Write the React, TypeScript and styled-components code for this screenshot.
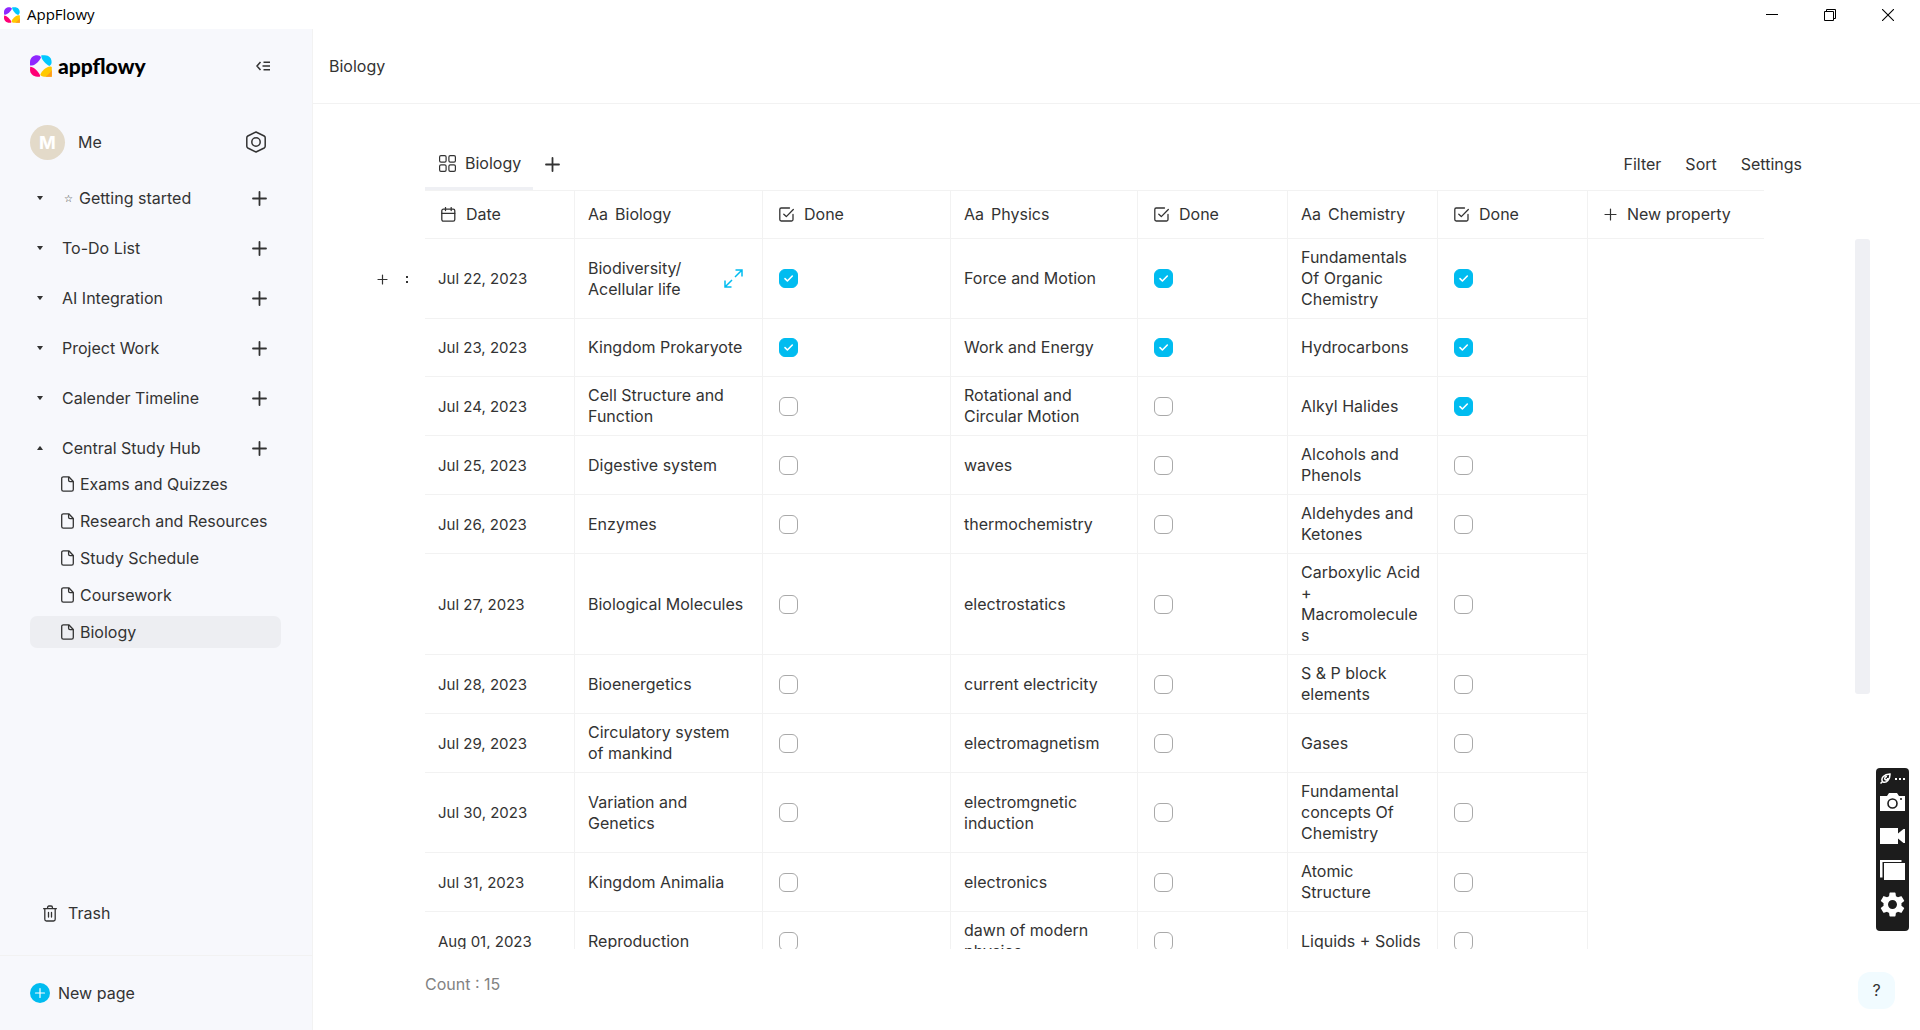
import React, { useState } from "react";
import styled, { createGlobalStyle } from "styled-components";

const GlobalStyle = createGlobalStyle`
  *, *::before, *::after { box-sizing: border-box; }
  body { margin: 0; background: #fff; }
  button, input { font: inherit; color: inherit; }
  button { border: 0; padding: 0; background: none; cursor: pointer; }
  svg { display: block; flex: none; }
`;

const ink = "#333333";
const line = "#f2f2f2";
const accent = "#00bcf0";

const Shell = styled.div`
  display: flex;
  flex-direction: column;
  height: 100vh;
  overflow: hidden;
  color: ${ink};
  font-family: Inter, "Noto Sans", sans-serif;
  font-size: 16px;
  line-height: 21px;
`;

const TitleBar = styled.header`
  display: flex;
  align-items: center;
  gap: 7px;
  height: 29px;
  padding: 0 20px 0 4px;
  flex: none;
  color: #000;
  font-family: "Open Sans", "Noto Sans", sans-serif;
  font-size: 15px;
`;

const WindowButtons = styled.div`
  display: flex;
  gap: 34px;
  margin-left: auto;
  button { display: grid; place-items: center; width: 24px; height: 24px; }
`;

const Body = styled.div`
  display: flex;
  flex: 1;
  min-height: 0;
`;

const Sidebar = styled.aside`
  display: flex;
  flex-direction: column;
  width: 313px;
  flex: none;
  background: #f7f8fc;
  border-right: 1px solid ${line};
`;

const Brand = styled.div`
  display: flex;
  align-items: center;
  gap: 6px;
  height: 74px;
  padding: 0 42px 0 30px;
`;

const BrandName = styled.span`
  color: #000;
  font-family: Lato, sans-serif;
  font-size: 21px;
  font-weight: 900;
  line-height: 26px;
`;

const IconButton = styled.button<{ $end?: boolean }>`
  display: grid;
  place-items: center;
  flex: none;
  margin-left: ${(p) => (p.$end ? "auto" : "0")};
`;

const User = styled.div`
  display: flex;
  align-items: center;
  gap: 13px;
  height: 36px;
  margin: 21px 46px 13px 30px;
`;

const Avatar = styled.span`
  display: grid;
  place-items: center;
  width: 35px;
  height: 35px;
  border-radius: 50%;
  background: #e3dac9;
  color: #fff;
  font-size: 18px;
  font-weight: 700;
`;

const Tree = styled.nav`
  display: flex;
  flex-direction: column;
`;

const TreeRow = styled.div`
  display: flex;
  align-items: center;
  height: 50px;
  padding: 0 45px 0 30px;
`;

const Caret = styled.button`
  display: grid;
  place-items: center;
  width: 20px;
  height: 20px;
  margin-right: 12px;
`;

const TreeLink = styled.a`
  display: flex;
  align-items: center;
  gap: 6px;
  color: inherit;
  text-decoration: none;
`;

const Star = styled.span`
  width: 11px;
  text-align: right;
  font-family: "DejaVu Sans", sans-serif;
  font-size: 10px;
  font-weight: 700;
`;

const Pages = styled.div`
  display: flex;
  flex-direction: column;
  gap: 5px;
  padding: 0 31px 0 30px;
  margin-top: -5px;
`;

const PageLink = styled.a<{ $active?: boolean }>`
  display: flex;
  align-items: center;
  gap: 6px;
  height: 32px;
  padding-left: 31px;
  border-radius: 7px;
  background: ${(p) => (p.$active ? "#edeef2" : "transparent")};
  color: inherit;
  text-decoration: none;
  white-space: nowrap;
`;

const TrashButton = styled.button`
  display: flex;
  align-items: center;
  gap: 11px;
  height: 40px;
  margin: auto 30px 22px 43px;
`;

const NewPage = styled.div`
  display: flex;
  align-items: center;
  height: 75px;
  padding: 0 30px;
  border-top: 1px solid ${line};
  button { display: flex; align-items: center; gap: 8px; }
`;

const Main = styled.main`
  display: flex;
  flex-direction: column;
  flex: 1;
  min-width: 0;
`;

const PageBar = styled.div`
  display: flex;
  align-items: center;
  height: 75px;
  flex: none;
  padding: 0 16px;
  border-bottom: 1px solid ${line};
`;

const PageTitle = styled.h1`
  margin: 0;
  font-size: 16px;
  font-weight: 400;
`;

const TabBar = styled.div`
  display: flex;
  align-items: stretch;
  height: 51px;
  flex: none;
  margin: 35px 118px 0 112px;
`;

const Tab = styled.button`
  display: flex;
  align-items: center;
  gap: 9px;
  padding: 1px 12px 0 14px;
  border-bottom: 3px solid #eff0f4;
`;

const AddTab = styled.button`
  display: grid;
  place-items: center;
  width: 38px;
`;

const Tools = styled.div`
  display: flex;
  gap: 24px;
  margin-left: auto;
`;

const Content = styled.div`
  display: flex;
  flex: 1;
  min-height: 0;
  padding-right: 50px;
`;

const TablePane = styled.div`
  flex: 1;
  min-width: 0;
  overflow: hidden;
`;

const ScrollThumb = styled.div`
  width: 15px;
  height: 60%;
  margin-top: 49px;
  border-radius: 3px;
  background: #eff0f4;
`;

const Grid = styled.table`
  table-layout: fixed;
  width: 1451px;
  border-collapse: separate;
  border-spacing: 0;
`;

const HeadCell = styled.th<{ $last?: boolean }>`
  height: 49px;
  padding: 0 13px;
  border: solid ${line};
  border-width: ${(p) => (p.$last ? "1px 0" : "1px 1px 1px 0")};
  font-weight: 400;
  text-align: left;
`;

const HeadLabel = styled.span<{ $kind: string }>`
  display: flex;
  align-items: center;
  gap: ${(p) => (p.$kind === "text" ? "7px" : "10px")};
  padding-left: ${(p) => (p.$kind === "text" ? "0" : "3px")};
`;

const Row = styled.tr`
  height: 58px;
`;

const Cell = styled.td<{ $kind: string }>`
  padding: 8px 14px 8px 13px;
  border: solid ${line};
  border-width: 0 1px 1px 0;
  font-size: ${(p) => (p.$kind === "date" ? "15px" : "16px")};
  overflow-wrap: anywhere;
`;

const BareCell = styled.td`
  padding: 0;
`;

const RowTools = styled.div`
  display: flex;
  align-items: center;
  justify-content: flex-end;
  gap: 12px;
  padding-right: 12px;
`;

const Title = styled.div`
  display: flex;
  align-items: center;
  justify-content: space-between;
  padding-right: 5px;
`;

const Check = styled.label`
  display: grid;
  width: 19px;
  height: 19px;
  margin-left: 3px;
  cursor: pointer;
  input, svg { grid-area: 1 / 1; }
  svg { pointer-events: none; }
`;

const Box = styled.input`
  appearance: none;
  width: 19px;
  height: 19px;
  margin: 0;
  border: 1px solid #a9a9a9;
  border-radius: 6px;
  background: #fff;
  &:checked { border-color: ${accent}; background: ${accent}; }
`;

const Footer = styled.footer`
  display: flex;
  align-items: center;
  justify-content: space-between;
  height: 81px;
  flex: none;
  padding: 0 25px 11px 112px;
  color: #828282;
`;

const Help = styled.button`
  width: 37px;
  height: 37px;
  margin-top: 12px;
  border-radius: 12px;
  background: #f1fbff;
  color: ${ink};
`;

const Recorder = styled.div`
  position: absolute;
  right: 11px;
  bottom: 99px;
  display: flex;
  flex-direction: column;
  align-items: center;
  width: 33px;
  height: 163px;
  padding-top: 4px;
  border-radius: 4px;
  background: #1c1c1c;
  color: #fff;
  button { display: grid; place-items: center; width: 25px; height: 34px; }
`;

const RecorderTop = styled.div`
  display: flex;
  align-items: center;
  gap: 4px;
  height: 13px;
`;

function LogoMark({ size }: { size: number }) {
  return (
    <svg width={size} height={size} viewBox="0 0 22 22">
      <path d="M0 10.4V7C0 2.6 3.4 .2 7 .2c2 0 3.5 .8 4 2.3C9.6 5.8 6 9.7 1.9 10.6z" fill="#8f27ff" />
      <path d="M11.3 .2h3.6c4.2 0 6.7 3.2 6.7 6.8 0 2-.8 3.4-2.3 3.9C16 9.4 12 5.5 11.3 1.6z" fill="#00c8ff" />
      <path d="M.2 11.8c3.3 0 8 4.3 9.9 8.6L9.8 21.7H7.2C3 21.7 0 18.5 0 14.8z" fill="#ff0076" />
      <path d="M21.8 12v9.7h-7.6c-2 0-3.5-.9-3.9-2.2 1.6-3.6 5-7 9.2-8 1.2-.2 1.9-.2 2.3 .5z" fill="#ffc900" />
      <path d="M21.8 15v6.700h-6.500c2.500-1.400 5-4 6.500-6.700z" fill="#ff9a1c" />
    </svg>
  );
}

function Plus({ size, width = 1.8 }: { size: number; width?: number }) {
  const h = size / 2;
  return (
    <svg width={size} height={size} fill="none" stroke="currentColor" strokeWidth={width} strokeLinecap="round">
      <path d={`M${h} 1V${size - 1}M1 ${h}H${size - 1}`} />
    </svg>
  );
}

function DocIcon() {
  return (
    <svg width="13" height="16" fill="none" stroke={ink} strokeWidth="1.3" strokeLinejoin="round">
      <path d="M2.4 .8h5.4L12.3 5.5v8a1.7 1.7 0 0 1-1.7 1.7H2.4A1.7 1.7 0 0 1 .7 13.500v-11A1.7 1.7 0 0 1 2.4 .8z" />
      <path d="M7.6 1v3.200a1.4 1.4 0 0 0 1.4 1.4h3.200" />
    </svg>
  );
}

function CheckField() {
  return (
    <svg width="15" height="15" fill="none" stroke={ink} strokeWidth="1.3" strokeLinecap="round" strokeLinejoin="round">
      <path d="M10.5 1H2.2A1.4 1.4 0 0 0 .8 2.4v10.2A1.4 1.4 0 0 0 2.2 14h10.4a1.4 1.4 0 0 0 1.4-1.4V7.5" />
      <path d="M4.8 7.3 7.3 9.6 14.3 2.5" />
    </svg>
  );
}

function CalendarIcon() {
  return (
    <svg width="15" height="15" fill="none" stroke={ink} strokeWidth="1.3" strokeLinecap="round">
      <rect x=".8" y="2.2" width="13" height="12" rx="1.6" />
      <path d="M.8 6.3h13M4.5 .6v3M10.2 .6v3" />
    </svg>
  );
}

const sections = ["Getting started", "To-Do List", "AI Integration", "Project Work", "Calender Timeline", "Central Study Hub"];
const pages = ["Exams and Quizzes", "Research and Resources", "Study Schedule", "Coursework", "Biology"];

const columns = [
  { label: "Date", kind: "date", width: 150 },
  { label: "Biology", kind: "text", width: 188 },
  { label: "Done", kind: "check", width: 188 },
  { label: "Physics", kind: "text", width: 187 },
  { label: "Done", kind: "check", width: 150 },
  { label: "Chemistry", kind: "text", width: 150 },
  { label: "Done", kind: "check", width: 150 },
];

type Entry = [string, string, boolean, string, boolean, string, boolean];

const entries: Entry[] = [
  ["Jul 22, 2023", "Biodiversity/ Acellular life", true, "Force and Motion", true, "Fundamentals Of Organic Chemistry", true],
  ["Jul 23, 2023", "Kingdom Prokaryote", true, "Work and Energy", true, "Hydrocarbons", true],
  ["Jul 24, 2023", "Cell Structure and Function", false, "Rotational and Circular Motion", false, "Alkyl Halides", true],
  ["Jul 25, 2023", "Digestive system", false, "waves", false, "Alcohols and Phenols", false],
  ["Jul 26, 2023", "Enzymes", false, "thermochemistry", false, "Aldehydes and Ketones", false],
  ["Jul 27, 2023", "Biological Molecules", false, "electrostatics", false, "Carboxylic Acid + Macromolecules", false],
  ["Jul 28, 2023", "Bioenergetics", false, "current electricity", false, "S & P block elements", false],
  ["Jul 29, 2023", "Circulatory system of mankind", false, "electromagnetism", false, "Gases", false],
  ["Jul 30, 2023", "Variation and Genetics", false, "electromgnetic induction", false, "Fundamental concepts Of Chemistry", false],
  ["Jul 31, 2023", "Kingdom Animalia", false, "electronics", false, "Atomic Structure", false],
  ["Aug 01, 2023", "Reproduction", false, "dawn of modern physics", false, "Liquids + Solids", false],
];

function DoneBox({ initial, label }: { initial: boolean; label: string }) {
  const [on, setOn] = useState(initial);
  return (
    <Check>
      <Box type="checkbox" checked={on} onChange={() => setOn(!on)} aria-label={label} />
      {on && (
        <svg width="19" height="19" fill="none" stroke="#fff" strokeWidth="1.6" strokeLinecap="round" strokeLinejoin="round">
          <path d="M6 9.6 8.4 12 13.3 7" />
        </svg>
      )}
    </Check>
  );
}

export default function App() {
  return (
    <Shell>
      <GlobalStyle />
      <TitleBar>
        <LogoMark size={16} />
        <span>AppFlowy</span>
        <WindowButtons>
          <button aria-label="Minimize">
            <svg width="12" height="12" stroke="#000"><path d="M0 5.5h12" /></svg>
          </button>
          <button aria-label="Restore">
            <svg width="12" height="12" fill="none" stroke="#000">
              <path d="M.5 2.5h9v9h-9zM2.5 2.5v-2h9v9h-2" />
            </svg>
          </button>
          <button aria-label="Close">
            <svg width="12" height="12" stroke="#000" strokeWidth="1.1"><path d="M0 0 12 12M12 0 0 12" /></svg>
          </button>
        </WindowButtons>
      </TitleBar>
      <Body>
        <Sidebar>
          <Brand>
            <LogoMark size={22} />
            <BrandName>appflowy</BrandName>
            <IconButton $end aria-label="Collapse sidebar">
              <svg width="14" height="10" fill="none" stroke={ink} strokeWidth="1.5">
                <path d="M4.5 1 1 5l3.5 4M7.5 1.2H14M6.5 5H14M7.5 8.8H14" />
              </svg>
            </IconButton>
          </Brand>
          <User>
            <Avatar>M</Avatar>
            <span>Me</span>
            <IconButton $end aria-label="User settings">
              <svg width="20" height="22" fill="none" stroke={ink} strokeWidth="1.5" strokeLinejoin="round">
                <path d="M10 1 18.2 5a2 2 0 0 1 1 1.7v8.6a2 2 0 0 1-1 1.7L10 21 1.8 17a2 2 0 0 1-1-1.7V6.7a2 2 0 0 1 1-1.7z" />
                <circle cx="10" cy="11" r="4.2" />
              </svg>
            </IconButton>
          </User>
          <Tree>
            {sections.map((name, i) => (
              <TreeRow key={name}>
                <Caret aria-label={`Toggle ${name}`}>
                  <svg width="6" height="4" fill={ink}>
                    <path d={i === 5 ? "M0 4h6L3.6 .6a.8 .8 0 0 0-1.2 0z" : "M0 0h6L3.6 3.4a.8 .8 0 0 1-1.2 0z"} />
                  </svg>
                </Caret>
                <TreeLink href="#">
                  {i === 0 && <Star>☆</Star>}
                  {name}
                </TreeLink>
                <IconButton $end aria-label={`Add page to ${name}`}>
                  <Plus size={15} />
                </IconButton>
              </TreeRow>
            ))}
            <Pages>
              {pages.map((name) => (
                <PageLink key={name} href="#" $active={name === "Biology"}>
                  <DocIcon />
                  {name}
                </PageLink>
              ))}
            </Pages>
          </Tree>
          <TrashButton>
            <svg width="14" height="17" fill="none" stroke={ink} strokeWidth="1.3" strokeLinecap="round">
              <path d="M.6 3.7h12.8M4.6 3.5V2.3A1.3 1.3 0 0 1 5.9 1h2.2a1.3 1.3 0 0 1 1.3 1.3v1.2M1.8 3.8V14.3a1.7 1.7 0 0 0 1.7 1.7h7a1.7 1.7 0 0 0 1.7-1.7V3.8M5.5 7.5v4.5M8.5 7.5v4.5" />
            </svg>
            Trash
          </TrashButton>
          <NewPage>
            <button>
              <svg width="20" height="20" fill="none" stroke="#fff" strokeWidth="1.2" strokeLinecap="round">
                <circle cx="10" cy="10" r="10" fill={accent} stroke="none" />
                <path d="M10 5.5v9M5.5 10h9" />
              </svg>
              New page
            </button>
          </NewPage>
        </Sidebar>
        <Main>
          <PageBar>
            <PageTitle>Biology</PageTitle>
          </PageBar>
          <TabBar>
            <Tab>
              <svg width="17" height="17" fill="none" stroke={ink} strokeWidth="1.2">
                <rect x=".6" y=".6" width="6.5" height="6.5" rx="1.4" />
                <rect x="9.9" y=".6" width="6.5" height="6.5" rx="1.4" />
                <rect x=".6" y="9.9" width="6.5" height="6.5" rx="1.4" />
                <rect x="9.9" y="9.9" width="6.5" height="6.5" rx="1.4" />
              </svg>
              Biology
            </Tab>
            <AddTab aria-label="Add view">
              <Plus size={15} />
            </AddTab>
            <Tools>
              <button>Filter</button>
              <button>Sort</button>
              <button>Settings</button>
            </Tools>
          </TabBar>
          <Content>
            <TablePane>
              <Grid>
                <colgroup>
                  <col width={112} />
                  {columns.map((c, i) => (
                    <col key={i} width={c.width} />
                  ))}
                  <col />
                </colgroup>
                <thead>
                  <tr>
                    <BareCell />
                    {columns.map((c, i) => (
                      <HeadCell key={i} scope="col">
                        <HeadLabel $kind={c.kind}>
                          {c.kind === "date" && <CalendarIcon />}
                          {c.kind === "check" && <CheckField />}
                          {c.kind === "text" && <span>Aa</span>}
                          {c.label}
                        </HeadLabel>
                      </HeadCell>
                    ))}
                    <HeadCell $last>
                      <HeadLabel as="button" $kind="add">
                        <Plus size={13} width={1.2} />
                        New property
                      </HeadLabel>
                    </HeadCell>
                  </tr>
                </thead>
                <tbody>
                  {entries.map((row, r) => (
                    <Row key={row[0]}>
                      <BareCell>
                        {r === 0 && (
                          <RowTools>
                            <IconButton aria-label="Add row">
                              <Plus size={11} width={1.2} />
                            </IconButton>
                            <IconButton aria-label="Row menu">
                              <svg width="13" height="13" fill={ink}>
                                <rect x="6" y="3" width="2" height="2" />
                                <rect x="6" y="8" width="2" height="2" />
                              </svg>
                            </IconButton>
                          </RowTools>
                        )}
                      </BareCell>
                      {row.map((v, c) => (
                        <Cell key={c} $kind={columns[c].kind}>
                          {typeof v === "boolean" ? (
                            <DoneBox initial={v} label={`${row[c - 1]} done`} />
                          ) : r === 0 && c === 1 ? (
                            <Title>
                              <span>Biodiversity/<br />Acellular life</span>
                              <IconButton aria-label="Open row">
                                <svg width="19" height="19" fill="none" stroke={accent} strokeWidth="1.5">
                                  <path d="M11.5 1H18v6.5M18 1l-7 7M7.5 18H1v-6.5M1 18l7-7" />
                                </svg>
                              </IconButton>
                            </Title>
                          ) : (
                            v
                          )}
                        </Cell>
                      ))}
                    </Row>
                  ))}
                </tbody>
              </Grid>
            </TablePane>
            <ScrollThumb />
          </Content>
          <Footer>
            <span>Count : 15</span>
            <Help aria-label="Help">?</Help>
          </Footer>
        </Main>
      </Body>
      <Recorder>
        <RecorderTop>
          <svg width="11" height="11" fill="none" stroke="#fff" strokeWidth="1.5">
            <path d="M.5 10.500 2.500 8.500C.5 5 4 1.300 10 1c.2 5.500-3.500 9.500-7 8M7 3.600C4.500 3.700 4 6.500 6 7c1.200 0 1.800-1 1.800-2" />
          </svg>
          <svg width="10" height="2" fill="#fff">
            <rect width="2" height="2" /><rect x="4" width="2" height="2" /><rect x="8" width="2" height="2" />
          </svg>
        </RecorderTop>
        <button aria-label="Screenshot">
          <svg width="25" height="18" fill="#fff">
            <path d="M0 3h7l2-3h8l2 3h6v15H0z" />
            <circle cx="12.5" cy="10.5" r="4.5" stroke="#1c1c1c" strokeWidth="1.6" />
            <circle cx="21" cy="6" r="1" fill="#1c1c1c" />
          </svg>
        </button>
        <button aria-label="Record video">
          <svg width="25" height="16" fill="#fff">
            <path d="M0 0h18v5.5L23.5 1H25v14h-1.5L18 10.5V16H0z" />
          </svg>
        </button>
        <button aria-label="Gallery">
          <svg width="25" height="20" fill="#fff">
            <path d="M0 0h21.5v2H2.5v15.5H0z" /><path d="M4 3h21v17H4z" />
          </svg>
        </button>
        <button aria-label="Recorder settings">
          <svg width="25" height="25" viewBox="2 2 20 20" fill="#fff">
            <path d="M19.14 12.94c.04-.3.06-.61.06-.94 0-.32-.02-.64-.07-.94l2.03-1.58c.18-.14.23-.41.12-.61l-1.92-3.32c-.12-.22-.37-.29-.59-.22l-2.39.96c-.5-.38-1.03-.7-1.62-.94l-.36-2.54c-.04-.24-.24-.41-.48-.41h-3.84c-.24 0-.43.17-.47.41l-.36 2.54c-.59.24-1.13.57-1.62.94l-2.39-.96c-.22-.08-.47 0-.59.22L2.74 8.87c-.12.21-.08.47.12.61l2.03 1.58c-.05.3-.09.63-.09.94s.02.64.07.94l-2.03 1.58c-.18.14-.23.41-.12.61l1.92 3.32c.12.22.37.29.59.22l2.39-.96c.5.38 1.03.7 1.62.94l.36 2.54c.05.24.24.41.48.41h3.84c.24 0 .44-.17.47-.41l.36-2.54c.59-.24 1.13-.56 1.62-.94l2.39.96c.22.08.47 0 .59-.22l1.92-3.32c.12-.22.07-.47-.12-.61l-2.01-1.58zM12 15.6c-1.98 0-3.6-1.62-3.6-3.6s1.62-3.6 3.6-3.6 3.6 1.62 3.6 3.6-1.62 3.6-3.6 3.6z" />
          </svg>
        </button>
      </Recorder>
    </Shell>
  );
}
